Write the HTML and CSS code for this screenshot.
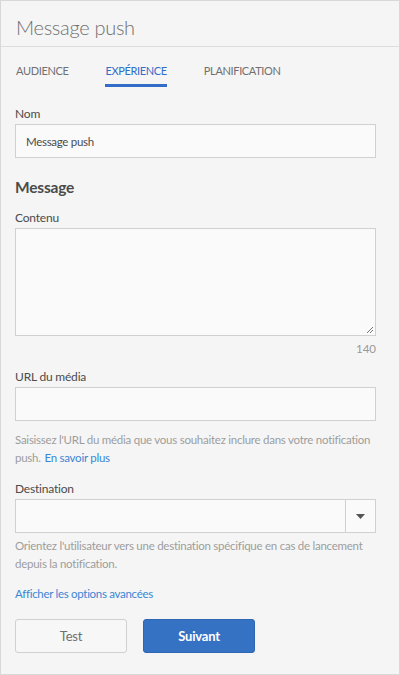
FILE: index.html
```html
<!DOCTYPE html>
<html lang="fr">
<head>
<meta charset="utf-8">
<link rel="stylesheet" href="styles.css">
</head>
<body>
<div class="panel">
  <header class="head"><h1 class="title">Message push</h1></header>
  <nav class="tabs">
    <span class="tab">AUDIENCE</span>
    <span class="tab active">EXPÉRIENCE</span>
    <span class="tab">PLANIFICATION</span>
  </nav>
  <form class="form">
    <label class="label lbl-nom">Nom</label>
    <div class="input">Message push</div>
    <h2 class="section">Message</h2>
    <label class="label">Contenu</label>
    <div class="textarea">
      <svg class="grip" width="8" height="8" viewBox="0 0 8 8"><path d="M7 1L1 7M7 4L4 7" stroke="#777" stroke-width="1"/></svg>
    </div>
    <div class="count">140</div>
    <label class="label">URL du média</label>
    <div class="input"></div>
    <p class="help help-url">Saisissez l'URL du média que vous souhaitez inclure dans votre notification push. <a class="link">En savoir plus</a></p>
    <label class="label">Destination</label>
    <div class="select">
      <div class="select-field"></div>
      <div class="select-btn"><svg width="9" height="5" viewBox="0 0 9 5"><path d="M0 0H9L4.5 5Z" fill="#555"/></svg></div>
    </div>
    <p class="help help-dest">Orientez l'utilisateur vers une destination spécifique en cas de lancement depuis la notification.</p>
    <a class="link adv">Afficher les options avancées</a>
    <div class="buttons">
      <button type="button" class="btn btn-secondary">Test</button>
      <button type="button" class="btn btn-primary">Suivant</button>
    </div>
  </form>
</div>
</body>
</html>
```
FILE: styles.css
```css
* { box-sizing: border-box; }
html, body { margin: 0; padding: 0; }
body {
  width: 400px;
  height: 675px;
  font-family: Lato, "Open Sans", sans-serif;
  background: #f5f5f5;
}
.panel {
  width: 400px;
  height: 675px;
  border: 1px solid #d8d8d8;
  background: #f5f5f5;
  display: flex;
  flex-direction: column;
}
.head {
  height: 46px;
  border-bottom: 1px solid #dcdcdc;
  padding: 0 15px;
  display: flex;
  align-items: center;
}
.title {
  margin: 0;
  font-size: 20px;
  font-weight: 300;
  letter-spacing: -0.3px;
  color: #707070;
  padding-top: 6px;
}
.tabs {
  display: flex;
  gap: 37px;
  padding: 0 15px;
  height: 40px;
  align-items: flex-end;
}
.tab {
  font-size: 11px;
  line-height: 14px;
  letter-spacing: -0.35px;
  color: #707070;
  padding-bottom: 6px;
  border-bottom: 3px solid transparent;
}
.tab.active {
  color: #326ec8;
  border-bottom-color: #326ec8;
}
.form {
  padding: 0 23px 0 14px;
  display: flex;
  flex-direction: column;
}
.label {
  font-size: 12px;
  line-height: 14px;
  letter-spacing: -0.2px;
  color: #4b4b4b;
  margin: 14px 0 3px;
}
.lbl-nom { margin-top: 20px; }
.section + .label { margin-top: 15px; }
.input {
  height: 34px;
  border: 1px solid #d0d0d0;
  background: #fafafa;
  font-size: 11.5px;
  letter-spacing: -0.3px;
  color: #4b4b4b;
  padding: 0 10px;
  display: flex;
  align-items: center;
}
.section {
  margin: 20px 0 0;
  font-size: 15.5px;
  font-weight: 700;
  letter-spacing: -0.2px;
  color: #4b4b4b;
  line-height: 18px;
}
.textarea {
  height: 108px;
  border: 1px solid #d0d0d0;
  background: #fafafa;
  position: relative;
}
.grip {
  position: absolute;
  right: 1px;
  bottom: 1px;
}
.count {
  text-align: right;
  font-size: 11.5px;
  line-height: 14px;
  color: #999;
  margin-top: 6px;
}
.help {
  margin: 10px 0 0;
  font-size: 11.5px;
  letter-spacing: -0.25px;
  line-height: 18px;
  color: #9d9d9d;
}
.help .link { margin-left: 1px; }
.help-url + .label { margin-top: 15px; }
.help.help-dest { margin-top: 4px; }
.link {
  color: #3b86d6;
  text-decoration: none;
}
.select {
  display: flex;
  height: 34px;
  border: 1px solid #d0d0d0;
  background: #fafafa;
}
.select-field { flex: 1; }
.select-btn {
  width: 30px;
  border-left: 1px solid #d0d0d0;
  display: flex;
  align-items: center;
  justify-content: center;
}
.adv {
  font-size: 11.5px;
  letter-spacing: -0.3px;
  line-height: 14px;
  margin-top: 14px;
}
.buttons {
  display: flex;
  gap: 16px;
  margin-top: 18px;
}
.btn {
  width: 112px;
  height: 34px;
  border-radius: 3px;
  font-family: Lato, sans-serif;
  font-size: 13px;
  letter-spacing: -0.2px;
  cursor: pointer;
}
.btn-secondary {
  background: #f7f7f7;
  border: 1px solid #d0d0d0;
  color: #707070;
}
.btn-primary {
  background: #3672c4;
  border: 1px solid #2f66b3;
  color: #fff;
  font-weight: 700;
}
```
